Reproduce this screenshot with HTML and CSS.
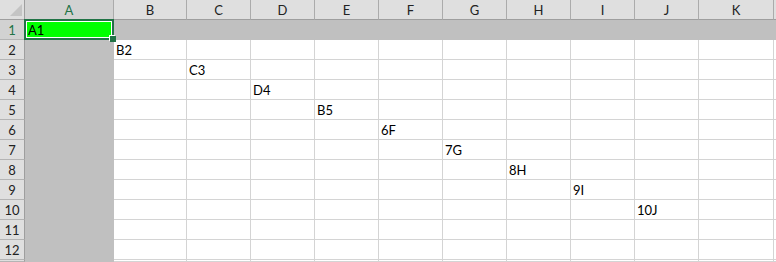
FILE: index.html
```html
<!DOCTYPE html>
<html lang="en">
<head>
    <meta charset="UTF-8">
    <title>Sheet1</title>
    <link rel="stylesheet" href="styles.css">
</head>
<body>
    <div class="sheet-wrap">
        <div class="sheet" id="sheet"></div>
        <div class="selection"></div>
        <div class="fill-handle"></div>
    </div>
<script>
    var columns = ['A', 'B', 'C', 'D', 'E', 'F', 'G', 'H', 'I', 'J', 'K', 'L'];
    var values = {
        A1: 'A1', B2: 'B2', C3: 'C3', D4: 'D4', E5: 'B5',
        F6: '6F', G7: '7G', H8: '8H', I9: '9I', J10: '10J'
    };

    var sheet = document.getElementById('sheet');
    var html = '<div class="corner"><svg width="12" height="12" viewBox="0 0 12 12"><polygon points="12,0 12,12 0,12" fill="#c4c4c4"/></svg></div>';

    // the last column and row only peek in at the edge, so no label
    columns.forEach(function(col) {
        var cls = col === 'A' ? 'col-head selected' : 'col-head';
        html += '<div class="' + cls + '">' + (col === 'L' ? '' : col) + '</div>';
    });

    for (var row = 1; row <= 13; row++) {
        var headCls = row === 1 ? 'row-head selected' : 'row-head';
        html += '<div class="' + headCls + '">' + (row === 13 ? '' : row) + '</div>';
        columns.forEach(function(col) {
            var ref = col + row;
            var cls = 'cell';
            if (ref === 'A1') cls += ' green';
            else if (row === 1 || col === 'A') cls += ' grey';
            html += '<div class="' + cls + '">' + (values[ref] || '') + '</div>';
        });
    }

    sheet.innerHTML = html;
</script>
</body>
</html>
```

FILE: styles.css
```css
body {
    margin: 0;
    background: white;
    font-family: Lato, "Liberation Sans", sans-serif;
    font-size: 13px;
    color: black;
    overflow: hidden;
}
.sheet-wrap {
    position: relative;
}
.sheet {
    display: grid;
    grid-template-columns: 25px 89px 73px repeat(8, 64px) 75px 1fr;
    grid-template-rows: repeat(13, 20px) 2px;
}
.sheet > div {
    box-sizing: border-box;
    overflow: hidden;
    white-space: nowrap;
    line-height: 19px;
    padding-top: 1px;
}
.corner {
    background: #dfdfdf;
    border-right: 1px solid #9e9e9e;
    border-bottom: 1px solid #9e9e9e;
    display: flex;
    align-items: flex-end;
    justify-content: flex-end;
    padding: 0 2px 3px 0;
}
.corner svg {
    display: block;
}
.col-head {
    background: #dfdfdf;
    border-right: 1px solid #ababab;
    border-bottom: 1px solid #9e9e9e;
    text-align: center;
    color: #222;
}
.row-head {
    background: #dfdfdf;
    border-right: 1px solid #9e9e9e;
    border-bottom: 1px solid #b4b4b4;
    text-align: center;
    color: #222;
}
.col-head.selected,
.row-head.selected {
    background: #d2d2d2;
    color: #217346;
}
.cell {
    border-right: 1px solid #d4d4d4;
    border-bottom: 1px solid #d4d4d4;
    padding-left: 2px;
}
.cell.grey {
    background: #c0c0c0;
    border-color: #c0c0c0;
}
.cell.green {
    background: #00ff00;
    border-color: #00ff00;
    padding-left: 3px;
}
.selection {
    position: absolute;
    left: 24px;
    top: 19px;
    width: 90px;
    height: 21px;
    box-sizing: border-box;
    border: 2px solid #217346;
    box-shadow: inset 0 0 0 1px white;
}
.fill-handle {
    position: absolute;
    left: 110px;
    top: 36px;
    width: 6px;
    height: 6px;
    background: #217346;
    box-shadow: -1px -1px 0 white;
}
```
